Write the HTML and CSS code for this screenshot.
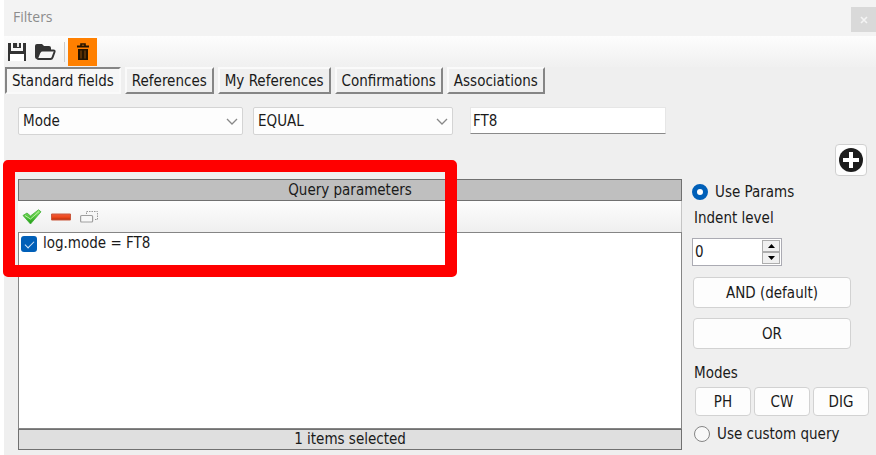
FILE: index.html
```html
<!DOCTYPE html>
<html lang="en">
  <head>
    <meta charset="UTF-8" />
    <meta name="viewport" content="width=device-width, initial-scale=1.0" />
    <title>Filters</title>
    <link rel="stylesheet" href="styles.css">
  </head>
  <body>
    <div class="window">
      <header class="titlebar">
        <h1 class="title">Filters</h1>
        <button class="close" aria-label="Close">
          <svg width="8" height="8" viewBox="0 0 8 8"><path d="M1 1l6 6M7 1l-6 6" stroke="#f4f4f4" stroke-width="1.6" /></svg>
        </button>
      </header>

      <div class="toolbar">
        <button class="tool" aria-label="Save">
          <svg width="20" height="20" viewBox="0 0 20 20">
            <path d="M1 1h3v8h12V1h3v18h-2v-7H3v7H1z" fill="#333" />
            <path d="M6 1h8v5H6z" fill="#333" />
            <path d="M10 1h2v4h-2z" fill="#e8e8e8" />
            <path d="M3 12h14v7H3z" fill="#fff" />
          </svg>
        </button>
        <button class="tool" aria-label="Open">
          <svg width="22" height="20" viewBox="0 0 22 20">
            <path d="M1 15V4q0-2 2-2h5l2 2h5q2 0 2 2v2H7L3 17q-2 0-2-2z" fill="#333" />
            <path d="M8.500 8.500h11q1.500 0 1 1.500l-2 5.500q-.5 1.500-2 1.500H4.500q-1.500 0-1-1.500l2-5Q6.500 8.500 8.500 8.500z" fill="#f6f6f6" stroke="#333" stroke-width="2" />
          </svg>
        </button>
        <span class="separator"></span>
        <button class="tool tool-clear" aria-label="Clear">
          <svg width="14" height="18" viewBox="0 0 14 18">
            <path d="M5 3V1h4v2" fill="none" stroke="#241400" stroke-width="1.600" />
            <path d="M1 2.500h12v2H1zM2 6h10v11H2z" fill="#241400" />
            <path d="M5 7.500v8M9 7.500v8" stroke="#8a4a08" stroke-width="1" />
          </svg>
        </button>
      </div>

      <nav class="tabs">
        <button class="tab tab-active">Standard fields</button>
        <button class="tab">References</button>
        <button class="tab">My References</button>
        <button class="tab">Confirmations</button>
        <button class="tab">Associations</button>
      </nav>

      <div class="filter">
        <div class="combo combo-field">
          <select aria-label="Field"><option>Mode</option></select>
          <svg class="arrow" width="12" height="8" viewBox="0 0 12 8"><path d="M1 1l5 5 5-5" fill="none" stroke="#888" stroke-width="1.300" /></svg>
        </div>
        <div class="combo combo-operator">
          <select aria-label="Operator"><option>EQUAL</option></select>
          <svg class="arrow" width="12" height="8" viewBox="0 0 12 8"><path d="M1 1l5 5 5-5" fill="none" stroke="#888" stroke-width="1.300" /></svg>
        </div>
        <input class="value" type="text" value="FT8" aria-label="Value" />
      </div>

      <div class="add-row">
        <button class="add" aria-label="Add parameter">
          <svg width="24" height="24" viewBox="0 0 24 24">
            <circle cx="12" cy="12" r="12" fill="#1c1c1c" />
            <path d="M12 4v16M4 12h16" stroke="#fff" stroke-width="4" />
          </svg>
        </button>
      </div>

      <main class="content">
        <section class="query">
          <h2 class="query-title">Query parameters</h2>
          <div class="query-tools">
            <button class="tool" aria-label="Check">
              <svg width="20" height="16" viewBox="0 0 20 16">
                <defs>
                  <linearGradient id="green" x1="0" y1="0" x2="0" y2="1">
                    <stop offset="0" stop-color="#8be86a" />
                    <stop offset="1" stop-color="#1c9a12" />
                  </linearGradient>
                </defs>
                <path d="M1 6.500l4-2.500 3.500 3L16.500.8l2.500 2L8.500 15z" fill="url(#green)" stroke="#3fae35" stroke-width=".8" />
                <path d="M3 6.500l5.500 3.500 8.500-7.500" fill="none" stroke="#b9f5a2" stroke-width="1" />
              </svg>
            </button>
            <button class="tool" aria-label="Remove">
              <svg width="20" height="8" viewBox="0 0 20 8">
                <defs>
                  <linearGradient id="red" x1="0" y1="0" x2="0" y2="1">
                    <stop offset="0" stop-color="#f0593a" />
                    <stop offset=".5" stop-color="#ef4a1d" />
                    <stop offset="1" stop-color="#b52a0a" />
                  </linearGradient>
                </defs>
                <path d="M.5 1h19v6H.5z" fill="url(#red)" stroke="#c9583c" />
              </svg>
            </button>
            <button class="tool" aria-label="Group" disabled>
              <svg width="18" height="14" viewBox="0 0 18 14">
                <path d="M6.500 4V1.500h11v8H14" fill="none" stroke="#999" stroke-dasharray="1.500 1" />
                <rect x=".6" y="5.500" width="12" height="6.500" rx="1" fill="#f8f8f8" stroke="#a0a0a0" stroke-width="1.200" />
              </svg>
            </button>
          </div>
          <div class="query-list">
            <label class="query-item"><input class="check" type="checkbox" checked />log.mode = FT8</label>
          </div>
          <p class="query-status">1 items selected</p>
          <div class="highlight"></div>
        </section>

        <aside class="options">
          <label class="radio-label"><input class="radio" type="radio" name="source" checked />Use Params</label>
          <label class="caption" for="indent">Indent level</label>
          <div class="spinner">
            <input id="indent" type="text" inputmode="numeric" value="0" />
            <div class="steps">
              <button class="step" aria-label="Increase"><svg width="7" height="4" viewBox="0 0 7 4"><path d="M0 4l3.500-4L7 4z" /></svg></button>
              <button class="step" aria-label="Decrease"><svg width="7" height="4" viewBox="0 0 7 4"><path d="M0 0l3.500 4L7 0z" /></svg></button>
            </div>
          </div>
          <button class="btn btn-wide">AND (default)</button>
          <button class="btn btn-wide">OR</button>
          <p class="caption modes-title">Modes</p>
          <div class="modes">
            <button class="btn">PH</button>
            <button class="btn">CW</button>
            <button class="btn">DIG</button>
          </div>
          <label class="radio-label radio-custom"><input class="radio" type="radio" name="source" />Use custom query</label>
        </aside>
      </main>
    </div>
  </body>
</html>
```
FILE: styles.css
```css
* {
  box-sizing: border-box;
}
body {
  margin: 0;
  background-color: #fff;
  color: #1a1a1a;
}
body,
button,
input,
select {
  font-family: "DejaVu Sans Condensed", Tahoma, "Noto Sans", sans-serif;
  font-size: 15px;
  line-height: 18px;
}
button,
select {
  color: inherit;
}
svg {
  display: block;
}
h1,
h2,
p {
  margin: 0;
  font-weight: 400;
}
.window {
  display: flex;
  flex-direction: column;
  min-height: 100vh;
  margin-left: 4px;
  background-color: #efefef;
}

.titlebar {
  display: flex;
  align-items: center;
  justify-content: space-between;
  height: 36px;
  padding-left: 9px;
  background-color: #f3f3f3;
}
.title {
  padding-bottom: 2px;
  color: #8c8c8c;
  font-family: "Open Sans", "Noto Sans", sans-serif;
  font-size: 14px;
}
.close {
  display: flex;
  align-items: center;
  justify-content: center;
  width: 25px;
  height: 25px;
  margin-top: 3px;
  padding: 0;
  border: none;
  background-color: #d9d9d9;
}

.toolbar {
  display: flex;
  align-items: center;
  gap: 7px;
  height: 31px;
  padding-left: 3px;
  background: linear-gradient(#fdfdfd, #f0f0f0);
}
.tool {
  padding: 0;
  border: none;
  background: none;
}
.separator {
  width: 1px;
  height: 20px;
  margin-left: 1px;
  background-color: #ccc;
}
.tool-clear {
  display: flex;
  align-items: center;
  justify-content: center;
  width: 29px;
  height: 28px;
  margin-left: -4px;
  background-color: #ff8000;
}

.tabs {
  display: flex;
  gap: 4px;
  padding-left: 1px;
}
.tab {
  height: 27px;
  padding: 0 5px;
  border: 2px solid;
  border-color: #fafafa #858585 #858585 #fafafa;
  background-color: #efefef;
  white-space: nowrap;
}
.tab-active {
  border-color: #858585 #fafafa #fafafa #858585;
  background-color: #f7f7f7;
}

.filter {
  display: flex;
  padding: 13px 14px 0;
}
.combo {
  position: relative;
  margin-right: 10px;
}
.combo select {
  width: 100%;
  height: 28px;
  padding: 0 4px;
  border: 1px solid #d4d4d4;
  border-radius: 2px;
  background-color: #fdfdfd;
  appearance: none;
}
.combo .arrow {
  position: absolute;
  top: 11px;
  right: 5px;
  pointer-events: none;
}
.combo-field {
  flex: 0 1 225px;
}
.combo-operator {
  flex: 0 1 200px;
  margin-right: 17px;
}
.value {
  flex: 0 1 196px;
  min-width: 0;
  height: 27px;
  padding: 0 2px;
  border: 1px solid #e6e6e6;
  border-bottom: 1px solid #8a8a8a;
  background-color: #fff;
  color: inherit;
}

.add-row {
  display: flex;
  justify-content: flex-end;
  padding: 9px 9px 3px 0;
}
.add {
  display: flex;
  align-items: center;
  justify-content: center;
  width: 32px;
  height: 32px;
  padding: 0;
  border: 1px solid #d0d0d0;
  border-radius: 4px;
  background-color: #fdfdfd;
}

.content {
  display: grid;
  flex: 1;
  grid-template-columns: 1fr 176px;
  gap: 10px;
  padding: 0 8px 5px 14px;
}
.query {
  position: relative;
  display: flex;
  flex-direction: column;
}
.query-title,
.query-status {
  border: 1px solid #707070;
  text-align: center;
}
.query-title {
  height: 22px;
  background-color: #bfbfbf;
  font-size: 15px;
  line-height: 20px;
}
.query-tools {
  display: flex;
  align-items: center;
  gap: 9px;
  height: 31px;
  padding-left: 4px;
  border-right: 1px solid #c4c4c4;
  background: linear-gradient(#fdfdfd, #efefef);
}
.query-list {
  flex: 1;
  border: 1px solid #858585;
  background-color: #fff;
}
.query-item {
  display: flex;
  align-items: center;
  gap: 6px;
  padding: 1px 2px;
}
.check {
  width: 16px;
  height: 16px;
  margin: 2px 0 0;
  border-radius: 3px;
  background-color: #005fb8;
  appearance: none;
}
.check:checked::after {
  content: "";
  display: block;
  width: 8px;
  height: 4px;
  margin: 5px 4px;
  border: solid #d6e8f8;
  border-width: 0 0 1px 1px;
  transform: rotate(-45deg);
}
.query-status {
  height: 21px;
  background-color: #dfdfdf;
  line-height: 19px;
}
/* red frame over the parameter list */
.highlight {
  position: absolute;
  top: -19px;
  left: -15px;
  width: 454px;
  height: 117px;
  border: 12px solid #f00;
  border-radius: 5px;
  pointer-events: none;
}

.options {
  display: flex;
  flex-direction: column;
  align-items: flex-start;
  padding-top: 4px;
}
.radio-label {
  display: flex;
  align-items: center;
  gap: 7px;
}
.radio {
  width: 16px;
  height: 16px;
  margin: 0;
  border: 1px solid #858585;
  border-radius: 50%;
  background-color: #f8f8f8;
  appearance: none;
}
.radio:checked {
  border: 5px solid #005fb8;
  background-color: #fff;
}
.caption {
  margin: 8px 0 0 2px;
}
.spinner {
  display: flex;
  width: 90px;
  height: 28px;
  margin: 11px 0 11px;
  padding: 1px;
  border: 1px solid #ababb3;
  background-color: #fff;
}
.spinner input {
  flex: 1;
  min-width: 0;
  padding: 0 1px;
  border: none;
  background: none;
  color: inherit;
}
.steps {
  display: flex;
  flex-direction: column;
  width: 18px;
}
.step {
  display: flex;
  flex: 1;
  align-items: center;
  justify-content: center;
  padding: 0;
  border: 1px solid #adadad;
  background-color: #f0f0f0;
}
.btn {
  height: 29px;
  padding: 0;
  border: 1px solid #d2d2d2;
  border-radius: 4px;
  background-color: #fdfdfd;
}
.btn-wide {
  width: 158px;
  height: 31px;
  margin: 0 0 10px 1px;
}
.modes-title {
  margin-top: 5px;
}
.modes {
  display: grid;
  grid-template-columns: repeat(3, 1fr);
  gap: 3px;
  width: 174px;
  margin: 5px 0 9px 3px;
}
.radio-custom {
  padding-left: 2px;
}
```
